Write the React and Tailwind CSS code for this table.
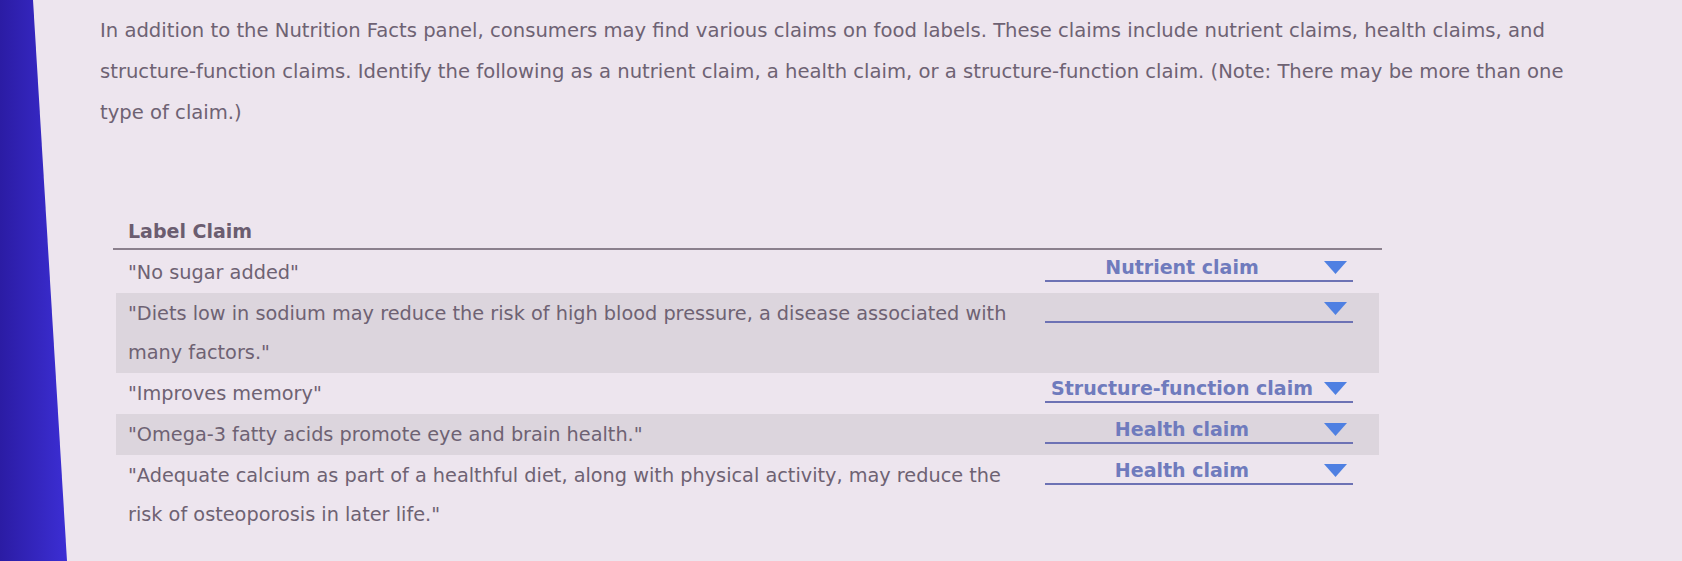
import React from 'react'

const rows = [
  { lines: ['"No sugar added"'], value: 'Nutrient claim', shaded: false },
  {
    lines: [
      '"Diets low in sodium may reduce the risk of high blood pressure, a disease associated with',
      'many factors."',
    ],
    value: '',
    shaded: true,
  },
  { lines: ['"Improves memory"'], value: 'Structure-function claim', shaded: false },
  { lines: ['"Omega-3 fatty acids promote eye and brain health."'], value: 'Health claim', shaded: true },
  {
    lines: [
      '"Adequate calcium as part of a healthful diet, along with physical activity, may reduce the',
      'risk of osteoporosis in later life."',
    ],
    value: 'Health claim',
    shaded: false,
  },
]

function ClaimSelect({ value }) {
  return (
    <div className="flex items-center h-[29px] w-[308px] shrink-0 border-b-2 border-[#6d72b4] relative">
      <span className="flex-1 text-center text-[19px] font-bold text-[#6f7bbd] pr-[34px] leading-[24px] whitespace-nowrap">
        {value}
      </span>
      <svg width="23" height="13" viewBox="0 0 23 13" className="absolute right-[6px] top-[8px]">
        <polygon points="0,0 23,0 11.5,13" fill="#4f80e2" />
      </svg>
    </div>
  )
}

export default function App() {
  return (
    <div
      className="flex w-[1682px] h-[561px] bg-[#ede5ee] overflow-hidden"
      style={{ fontFamily: '"DejaVu Sans", Verdana, sans-serif' }}
    >
      {/* slanted side strip */}
      <div className="w-[67px] shrink-0 bg-gradient-to-r from-[#2b1ca4] to-[#3c2ed4] [clip-path:polygon(0_0,33px_0,67px_100%,0_100%)]" />

      <div className="flex-1 pl-[33px] pt-[10px] text-[#6e6273]">
        {/* QUESTION TEXT */}
        <p className="text-[19.6px] leading-[41px] whitespace-nowrap">
          In addition to the Nutrition Facts panel, consumers may find various claims on food labels. These claims include nutrient claims, health claims, and
          <br />
          structure-function claims. Identify the following as a nutrient claim, a health claim, or a structure-function claim. (Note: There may be more than one
          <br />
          type of claim.)
        </p>

        {/* CLAIMS TABLE */}
        <div className="mt-[83px] ml-[13px] w-[1269px]">
          <div className="border-b-2 border-[#8b808d] pl-[15px] pb-[2px] text-[19px] font-bold leading-[30px] text-[#6b5d70]">
            Label Claim
          </div>
          <div className="flex flex-col pt-[2px]">
            {rows.map((row, i) => (
              <div
                key={i}
                className={
                  'flex items-start mx-[3px] py-[1px] pl-[12px] pr-[26px] ' + (row.shaded ? 'bg-[#dcd5dd]' : '')
                }
              >
                <div className="flex-1 text-[19.3px] leading-[39px] whitespace-nowrap">
                  {row.lines.map((l, j) => (
                    <div key={j}>{l}</div>
                  ))}
                </div>
                <ClaimSelect value={row.value} />
              </div>
            ))}
          </div>
        </div>
      </div>
    </div>
  )
}
